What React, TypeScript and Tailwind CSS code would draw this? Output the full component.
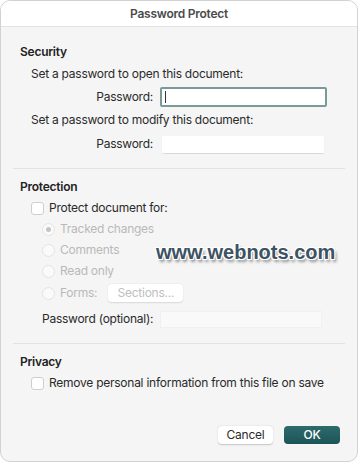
import React from 'react';

const Radio = ({ checked, label }: { checked?: boolean; label: string }) => (
  <div className="flex items-center h-[20px] mt-[1px] first:mt-0">
    <div className="w-[13px] h-[13px] rounded-full border border-[#e4e4e4] bg-[#fafafa] flex items-center justify-center">
      {checked && <div className="w-[5px] h-[5px] rounded-full bg-[#c4c4c4]" />}
    </div>
    <span className="ml-[5px] text-[#b9b9b9]">{label}</span>
  </div>
);

const Checkbox = ({ label }: { label: string }) => (
  <div className="flex items-center h-[20px] pl-[11px]">
    <div className="w-[13px] h-[13px] rounded-[3px] border border-[#cfcfcf] bg-white" />
    <span className="ml-[5px] text-[#2a2a2a]">{label}</span>
  </div>
);

const Heading = ({ children }: { children: React.ReactNode }) => (
  <div className="h-[20px] flex items-center font-semibold text-[#222]">{children}</div>
);

export default function App() {
  return (
    <div className="w-[360px] h-[464px] bg-white font-['Inter','Liberation_Sans',sans-serif] text-[12px] tracking-[-0.25px]">
      <div className="relative w-[358px] h-[462px] rounded-[10px] border border-[#d2d2d2] bg-[#f5f5f5] overflow-hidden flex flex-col">
        <div className="h-[26px] shrink-0 bg-white border-b border-[#e3e3e3] flex items-center justify-center">
          <span className="font-semibold text-[12px] text-[#4a4a4a]">Password Protect</span>
        </div>

        <div className="px-[19px] pt-[15px]">
          <Heading>Security</Heading>
          <div className="h-[20px] mt-[2px] pl-[11px] flex items-center text-[#2a2a2a]">Set a password to open this document:</div>
          <div className="h-[22px] mt-[2px] flex items-center">
            <span className="w-[133px] text-right text-[#2a2a2a]">Password:</span>
            <div className="ml-[7px] w-[167px] h-[20px] bg-white border-2 border-[#7a9a9a] rounded-[2px] flex items-center pl-[3px]">
              <div className="w-[1px] h-[12px] bg-[#333]" />
            </div>
          </div>
          <div className="h-[20px] mt-[2px] pl-[11px] flex items-center text-[#2a2a2a]">Set a password to modify this document:</div>
          <div className="h-[20px] mt-[4px] flex items-center">
            <span className="w-[133px] text-right text-[#2a2a2a]">Password:</span>
            <div className="ml-[9px] w-[162px] h-[17px] bg-white shadow-[0_0.5px_1px_rgba(0,0,0,0.12)]" />
          </div>
        </div>

        <div className="mx-[12px] mt-[14px] border-t border-[#e2e2e2]" />

        <div className="px-[19px] pt-[8px]">
          <Heading>Protection</Heading>
          <div className="mt-[1px]">
            <Checkbox label="Protect document for:" />
          </div>
          <div className="pl-[22px] mt-[1px]">
            <Radio checked label="Tracked changes" />
            <Radio label="Comments" />
            <Radio label="Read only" />
            <div className="flex items-center h-[22px] mt-[1px]">
              <div className="w-[13px] h-[13px] rounded-full border border-[#e4e4e4] bg-[#fafafa]" />
              <span className="ml-[5px] text-[#b9b9b9]">Forms:</span>
              <div className="ml-[11px] w-[75px] h-[18px] rounded-[4px] bg-white shadow-[0_0.5px_1.5px_rgba(0,0,0,0.12)] flex items-center justify-center text-[#c0c0c0]">
                Sections...
              </div>
            </div>
          </div>
          <div className="h-[20px] mt-[5px] pl-[22px] flex items-center">
            <span className="w-[118px] text-[#2a2a2a]">Password (optional):</span>
            <div className="w-[162px] h-[17px] bg-[#f9f9f9] border border-[#f0f0f0]" />
          </div>
        </div>

        <div className="mx-[12px] mt-[14px] border-t border-[#e2e2e2]" />

        <div className="px-[19px] pt-[8px]">
          <Heading>Privacy</Heading>
          <div className="mt-[1px]">
            <Checkbox label="Remove personal information from this file on save" />
          </div>
        </div>

        <div className="flex-1" />

        <div className="flex justify-end gap-[11px] pr-[17px] pb-[17px]">
          <div className="w-[55px] h-[18px] rounded-[4px] bg-white shadow-[0_0.5px_1.5px_rgba(0,0,0,0.2)] flex items-center justify-center text-[#2a2a2a]">
            Cancel
          </div>
          <div className="w-[56px] h-[18px] rounded-[4px] bg-gradient-to-b from-[#2d6b6d] to-[#1c5456] flex items-center justify-center text-white font-medium">
            OK
          </div>
        </div>

        <div className="absolute left-[155px] top-[236px] font-['Liberation_Sans',sans-serif] font-bold text-[20px] text-[#3d5263] tracking-[0px] [text-shadow:-1px_-1px_0_#fff,1px_-1px_0_#fff,-1px_1px_0_#fff,1px_1px_0_#fff,0_-1px_0_#fff,0_1px_0_#fff,-1px_0_0_#fff,1px_0_0_#fff,2px_3px_3px_rgba(0,0,0,0.45)]">
          www.webnots.com
        </div>
      </div>
    </div>
  );
}
